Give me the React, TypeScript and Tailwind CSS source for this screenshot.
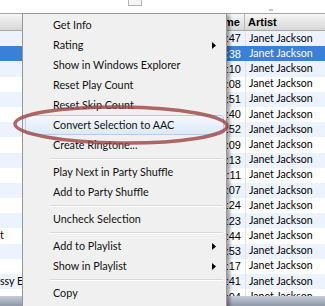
import { ReactNode } from "react";

type Row = { name?: string; time: string };

const rows: Row[] = [
    { time: "4:47" },
    { time: "4:38" },
    { time: "4:10" },
    { time: "5:08" },
    { time: "4:51" },
    { time: "4:40" },
    { time: "3:52" },
    { time: "5:09" },
    { time: "4:13" },
    { time: "4:11" },
    { time: "5:07" },
    { time: "4:24" },
    { time: "3:23" },
    { name: "t", time: "4:44" },
    { time: "4:53" },
    { time: "4:17" },
    { name: "ssy Eyes", time: "4:41" },
    { time: "4:04" },
];

function Arrow() {
    return (
        <svg width="4" height="7" viewBox="0 0 4 7" className="ml-auto mr-[10px]">
            <path d="M0 0 L4 3.5 L0 7 Z" fill="#000" />
        </svg>
    );
}

function Item({ label, sub, active }: { label: ReactNode; sub?: boolean; active?: boolean }) {
    if (active) {
        return (
            <div className="h-[20px] px-[2px] flex">
                <div className="flex-1 flex items-center pl-[27px] rounded-[3px] border border-[#b3cdee] bg-linear-to-b from-[#f4f8fe] to-[#dde9f9]">
                    {label}
                </div>
            </div>
        );
    }
    return (
        <div className="h-[20px] flex items-center pl-[30px]">
            {label}
            {sub && <Arrow />}
        </div>
    );
}

function Sep() {
    return (
        <div className="h-[7px] flex items-center pl-[27px] pr-[3px]">
            <div className="w-full border-t border-[#d9d9d9] border-b border-b-white" />
        </div>
    );
}

function ContextMenu() {
    return (
        <div className="absolute left-[22px] top-[13px] w-[205px] h-[310px] bg-[#f0f0f0] border border-[#979797] py-[1px] shadow-[3px_2px_3px_rgba(0,0,0,0.35)] text-[10.8px] text-[#111] font-['Lato',sans-serif]">
            <Item label="Get Info" />
            <Item label="Rating" sub />
            <Item label="Show in Windows Explorer" />
            <Item label="Reset Play Count" />
            <Item label="Reset Skip Count" />
            <Item label="Convert Selection to AAC" active />
            <Item label="Create Ringtone..." />
            <Sep />
            <Item label="Play Next in Party Shuffle" />
            <Item label="Add to Party Shuffle" />
            <Sep />
            <Item label="Uncheck Selection" />
            <Sep />
            <Item label="Add to Playlist" sub />
            <Item label="Show in Playlist" sub />
            <Sep />
            <Item label="Copy" />
        </div>
    );
}

export default function App() {
    return (
        <div className="relative w-[325px] h-[306px] overflow-hidden bg-white flex flex-col font-['Lato',sans-serif] text-[10.6px] text-black">
            {/* strip above the list */}
            <div className="relative h-[14px] shrink-0 border-b border-[#a3a3a3] bg-white">
                <div className="absolute left-[128px] top-0 w-[14px] h-[6px] border border-t-0 border-[#b4b4b4] bg-[#f5f5f5]" />
                <div className="absolute left-[269px] top-[9px] w-[4px] h-[2px] bg-[#c4c4c4]" />
            </div>

            {/* column headers */}
            <div className="h-[17px] shrink-0 flex border-b border-[#a9a9a9] bg-linear-to-b from-[#f6f6f6] to-[#d7d7d7] font-bold text-[11px] font-['Liberation_Sans',Arial,sans-serif]">
                <div className="w-[196px] border-r border-[#f2f2f2]" />
                <div className="w-[49px] flex items-center justify-end pr-[4px] border-r border-[#b9b9b9]">Time</div>
                <div className="flex-1 flex items-center pl-[3px]">Artist</div>
            </div>

            {/* track rows */}
            <div className="flex-1 overflow-hidden">
                {rows.map((r, i) => {
                    const selected = i === 1;
                    const bg = selected ? "bg-[#3a7fd8] text-white" : i % 2 === 0 ? "bg-[#edf3fe]" : "bg-white";
                    return (
                        <div key={i} className={"h-[15.2px] flex items-center " + bg}>
                            <div className="w-[196px] overflow-hidden whitespace-nowrap">{r.name ?? ""}</div>
                            <div className="w-[49px] text-right pr-[4px] text-[11px] font-['Liberation_Sans',Arial,sans-serif]">{r.time}</div>
                            <div className={"flex-1 pl-[3px] self-stretch flex items-center border-l " + (selected ? "border-[#3a7fd8]" : "border-[#e3e3e3]")}>
                                Janet Jackson
                            </div>
                        </div>
                    );
                })}
            </div>

            {/* status bar */}
            <div className="h-[10px] shrink-0 bg-linear-to-b from-[#c7ced8] to-[#8e98a8]" />

            <ContextMenu />

            {/* annotation ring */}
            <svg className="absolute left-0 top-0 pointer-events-none" width="325" height="306">
                <ellipse cx="121" cy="125" rx="106" ry="18" fill="none" stroke="#9c4444" strokeOpacity="0.8" strokeWidth="3.5" transform="rotate(0.6 121 125)" />
            </svg>
        </div>
    );
}
